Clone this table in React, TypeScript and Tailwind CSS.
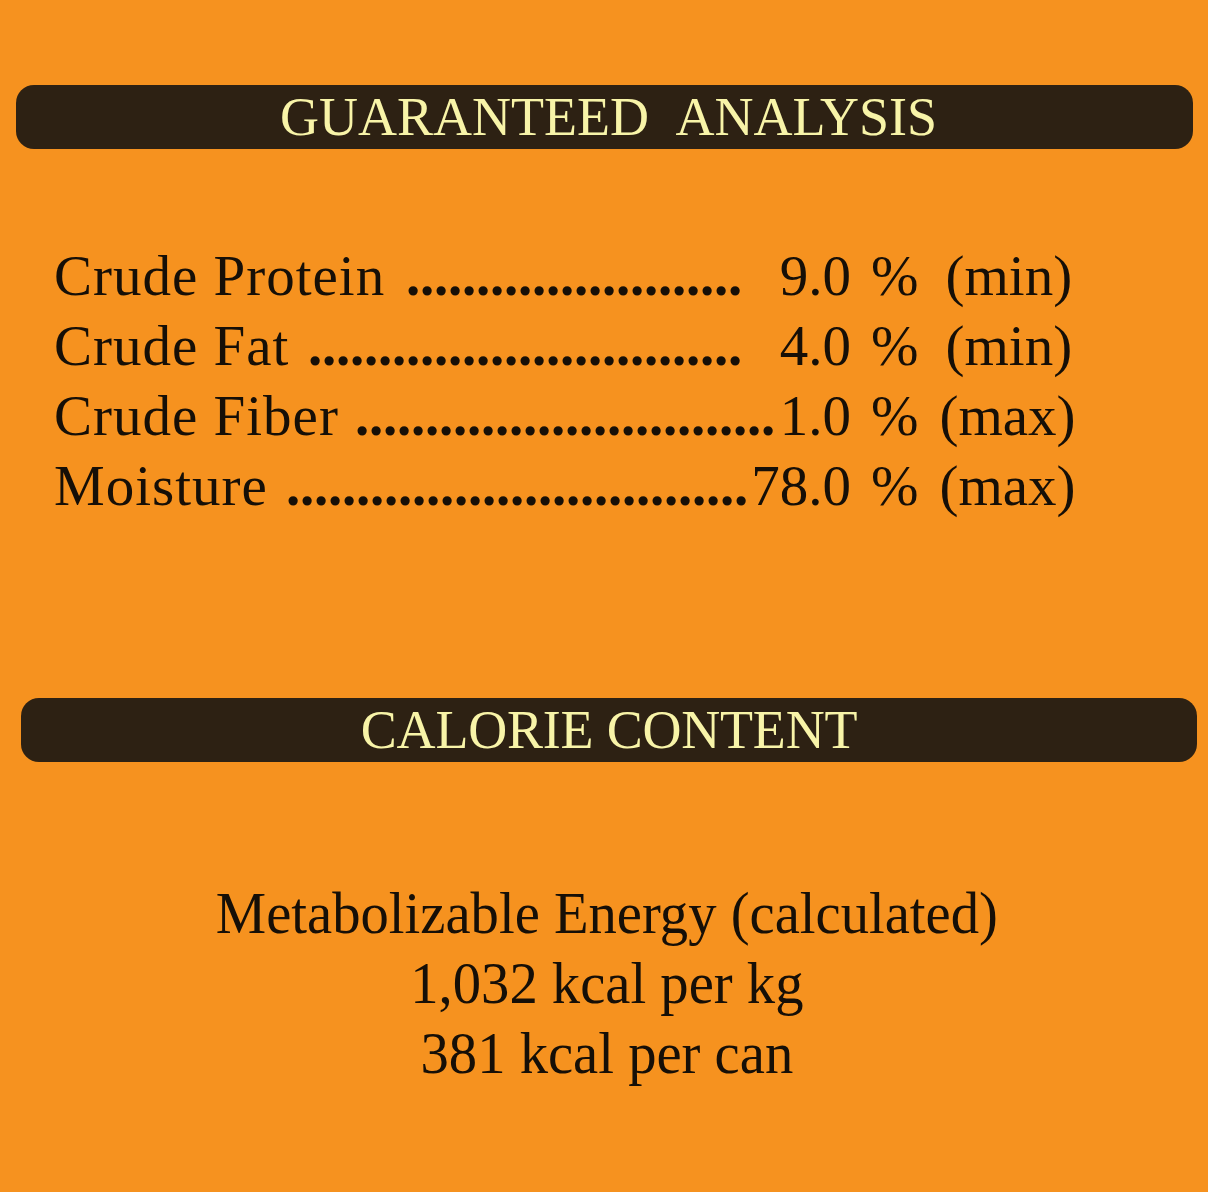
import React from 'react';

type Row = {
  label: string;
  dots: number;
  value: string;
  note: string;
  leadW: string;
  valueW: string;
  noteMl: string;
};

const rows: Row[] = [
  { label: 'Crude Protein', dots: 24, value: '9.0', note: '(min)', leadW: 'w-[688px]', valueW: 'w-[109px]', noteMl: 'ml-[27px]' },
  { label: 'Crude Fat', dots: 31, value: '4.0', note: '(min)', leadW: 'w-[688px]', valueW: 'w-[109px]', noteMl: 'ml-[27px]' },
  { label: 'Crude Fiber', dots: 30, value: '1.0', note: '(max)', leadW: 'w-[721px]', valueW: 'w-[76px]', noteMl: 'ml-[21px]' },
  { label: 'Moisture', dots: 33, value: '78.0', note: '(max)', leadW: 'w-[694px]', valueW: 'w-[103px]', noteMl: 'ml-[21px]' },
];

function SectionBar({ title, className, textClass = '' }: { title: string; className: string; textClass?: string }) {
  return (
    <div className={`h-16 rounded-[18px] bg-[#2d2113] flex items-center justify-center ${className}`}>
      <h2 className={`text-[54px] leading-none text-[#f8f4a8] whitespace-nowrap ${textClass}`}>{title}</h2>
    </div>
  );
}

function AnalysisRow({ row }: { row: Row }) {
  return (
    <div className="flex h-[70px] leading-[70px] whitespace-nowrap">
      {/* label on the left, leader dots pushed to the right edge of the cell */}
      <div className={`flex flex-none justify-between ${row.leadW}`}>
        <span className="tracking-[1px]">{row.label}</span>
        <span className="font-bold tracking-[-0.25px]">{'.'.repeat(row.dots)}</span>
      </div>
      <span className={`flex-none text-right ${row.valueW}`}>{row.value}</span>
      <span className="ml-[20px]">%</span>
      <span className={row.noteMl}>{row.note}</span>
    </div>
  );
}

export default function App() {
  return (
    <div className="min-h-[1192px] w-full bg-[#f6921f] pt-[85px] text-[#160f07] font-['Liberation_Serif',_'Times_New_Roman',_serif]">
      <SectionBar title="GUARANTEED ANALYSIS" className="ml-4 mr-[15px]" textClass="[word-spacing:16px] pl-[8px]" />

      <div className="mt-[92px] pl-[54px] text-[57px]">
        {rows.map((row) => (
          <AnalysisRow key={row.label} row={row} />
        ))}
      </div>

      <div className="mt-[177px]">
        <SectionBar title="CALORIE CONTENT" className="ml-[21px] mr-[11px]" textClass="tracking-[-0.2px]" />
      </div>

      <div className="mt-[116px] text-center text-[59px] leading-[70px] scale-x-[0.96] pl-[6px]">
        <p>Metabolizable Energy (calculated)</p>
        <p>1,032 kcal per kg</p>
        <p>381 kcal per can</p>
      </div>
    </div>
  );
}
